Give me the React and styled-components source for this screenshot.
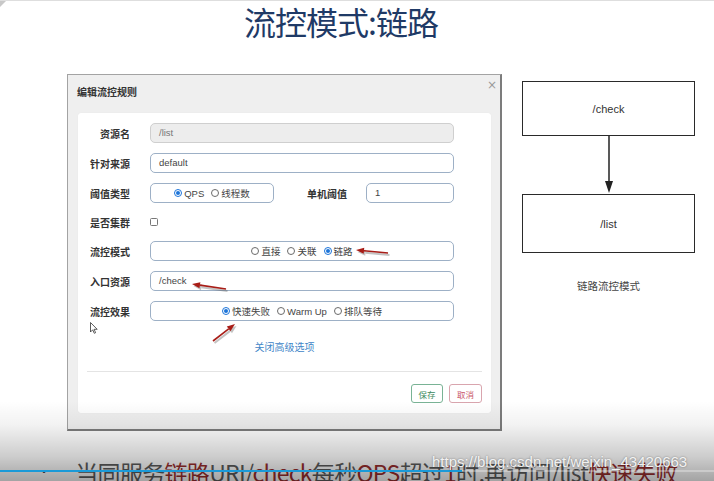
import React from 'react';
import styled, { createGlobalStyle } from 'styled-components';

const Global = createGlobalStyle`
  html, body { margin: 0; padding: 0; background: #fff; }
  body { font-family: "Noto Sans CJK SC", "Noto Sans", sans-serif; }
  * { box-sizing: border-box; }
`;

const Slide = styled.div`
  position: relative;
  width: 714px;
  height: 481px;
  overflow: hidden;
  background: #fff;
  border-top: 1px solid #dedede;
`;

const Corner = styled.div`
  position: absolute;
  left: 0;
  top: 0;
  width: 0;
  height: 0;
  border-top: 6px solid #c8c8c8;
  border-right: 6px solid transparent;
`;

const Title = styled.h1`
  margin: 0;
  height: 73px;
  padding: 0 32px 0 0;
  text-align: center;
  font-size: 32px;
  line-height: 40px;
  font-weight: 400;
  color: #1f3a66;
  letter-spacing: -1px;
`;

const Content = styled.div`
  display: flex;
  align-items: flex-start;
  padding-left: 67px;
  gap: 20px;
`;

const Dialog = styled.section`
  width: 435px;
  height: 357px;
  background: #efefef;
  border: 1px solid #a3a3a3;
  border-right: 2px solid #7c7c7c;
  border-bottom: 2px solid #7c7c7c;
  display: flex;
  flex-direction: column;
  padding: 0 9px 16px 10px;
`;

const DialogHeader = styled.header`
  height: 38px;
  display: flex;
  justify-content: space-between;
  align-items: flex-start;
  margin: 0 -6px 0 -1px;
`;

const DialogTitle = styled.h2`
  margin: 10px 0 0;
  font-size: 10px;
  line-height: 14px;
  font-weight: 700;
  color: #333;
`;

const Close = styled.span`
  margin-top: 3px;
  font-family: "DejaVu Sans", sans-serif;
  font-size: 12px;
  line-height: 14px;
  color: #9a9a9a;
`;

const Panel = styled.div`
  flex: 1;
  background: #fff;
  border-radius: 3px;
  box-shadow: 0 0 1px rgba(0, 0, 0, 0.08);
  padding: 10px 0 10px;
  display: flex;
  flex-direction: column;
`;

const Form = styled.div`
  display: flex;
  flex-direction: column;
  gap: 10px;
  margin-right: 37px;
`;

const Row = styled.div`
  display: grid;
  grid-template-columns: 52px 1fr;
  column-gap: 20px;
  align-items: center;
  height: ${(p) => (p.$short ? '18px' : '20px')};
`;

const Label = styled.label`
  text-align: right;
  font-size: 10px;
  font-weight: 700;
  color: #333;
  white-space: nowrap;
`;

const Input = styled.div`
  height: 20px;
  border: 1px solid ${(p) => (p.$disabled ? '#cfcfcf' : '#9db0c6')};
  background: ${(p) => (p.$disabled ? '#ededed' : '#fff')};
  border-radius: 5px;
  padding: 0 8px;
  font-family: "Liberation Sans", "Noto Sans CJK SC", sans-serif;
  font-size: 9.5px;
  line-height: 17px;
  color: ${(p) => (p.$disabled ? '#777' : '#444')};
`;

const RadioBox = styled.div`
  height: 20px;
  border: 1px solid #9db0c6;
  border-radius: 5px;
  display: flex;
  align-items: center;
  justify-content: center;
  gap: 7px;
`;

const Split = styled.div`
  display: grid;
  grid-template-columns: 124px 1fr 88px;
  align-items: center;
`;

const InlineLabel = styled(Label)`
  padding-right: 19px;
`;

const RadioItem = styled.span`
  display: inline-flex;
  align-items: center;
  gap: 2px;
  font-family: "Liberation Sans", "Noto Sans CJK SC", sans-serif;
  font-size: 9.5px;
  color: #444;
  white-space: nowrap;
`;

const Dot = styled.span`
  width: 8px;
  height: 8px;
  border-radius: 50%;
  border: 1px solid ${(p) => (p.$on ? '#1c74d9' : '#6b6b6b')};
  display: inline-flex;
  align-items: center;
  justify-content: center;
  &::after {
    content: '';
    width: 4px;
    height: 4px;
    border-radius: 50%;
    background: ${(p) => (p.$on ? '#1c74d9' : 'transparent')};
  }
`;

const Check = styled.span`
  width: 8px;
  height: 8px;
  border: 1px solid #777;
  border-radius: 1.5px;
`;

const Link = styled.a`
  margin-top: 18px;
  text-align: center;
  font-size: 10px;
  line-height: 16px;
  color: #3f86c8;
`;

const Divider = styled.hr`
  margin: 16px 9px 0;
  border: 0;
  border-top: 1px solid #e4e4e4;
  height: 0;
`;

const Footer = styled.div`
  margin-top: 12px;
  padding: 0 9px;
  display: flex;
  justify-content: flex-end;
  gap: 6px;
`;

const Button = styled.button`
  height: 19px;
  width: ${(p) => p.$w}px;
  padding: 0;
  background: #fff;
  border: 1px solid ${(p) => (p.$kind === 'ok' ? '#79b395' : '#d9a5ae')};
  color: ${(p) => (p.$kind === 'ok' ? '#3d8a5e' : '#c9566a')};
  border-radius: 3px;
  font-family: "Noto Sans CJK SC", sans-serif;
  font-size: 8.5px;
`;

const Diagram = styled.div`
  width: 173px;
  margin-top: 7px;
  display: flex;
  flex-direction: column;
  align-items: center;
`;

const Node = styled.div`
  width: 173px;
  height: ${(p) => p.$h}px;
  border: 1.5px solid #2a2a2a;
  display: flex;
  align-items: center;
  justify-content: center;
  font-family: "Liberation Sans", sans-serif;
  font-size: 11px;
  color: #333;
`;

const Caption = styled.div`
  margin-top: 25px;
  font-size: 10.5px;
  line-height: 16px;
  color: #444;
`;

const Bullet = styled.div`
  margin-top: 26px;
  padding-left: 38px;
  display: flex;
  align-items: center;
  gap: 26px;
  font-size: 23px;
  line-height: 30px;
  color: #5c5c5c;
  white-space: nowrap;
  letter-spacing: -0.7px;
`;

const BulletDot = styled.span`
  font-size: 12px;
  color: #444;
`;

const Red = styled.span`
  color: #9a2e2e;
`;

const Shade = styled.div`
  position: absolute;
  left: 0;
  right: 0;
  bottom: 0;
  height: 80px;
  pointer-events: none;
  background: linear-gradient(
    to bottom,
    rgba(0, 0, 0, 0) 0%,
    rgba(0, 0, 0, 0.05) 30%,
    rgba(0, 0, 0, 0.2) 70%,
    rgba(0, 0, 0, 0.36) 100%
  );
`;

const Track = styled.div`
  position: absolute;
  left: 0;
  right: 0;
  top: 469px;
  height: 2px;
  background: rgba(255, 255, 255, 0.3);
`;

const Progress = styled.div`
  position: absolute;
  left: 0;
  top: 469px;
  height: 2px;
  background: #1a9ad8;
`;

const Watermark = styled.div`
  position: absolute;
  left: 432px;
  top: 452px;
  font-family: "Liberation Sans", sans-serif;
  font-size: 15px;
  line-height: 17px;
  color: rgba(255, 255, 255, 0.9);
  text-shadow: 0 0 2px rgba(0, 0, 0, 0.45);
`;

const Annot = styled.svg`
  position: absolute;
  left: 0;
  top: 0;
  pointer-events: none;
  overflow: visible;
`;

function RedArrow({ x1, y1, x2, y2 }) {
  const dx = x2 - x1;
  const dy = y2 - y1;
  const len = Math.hypot(dx, dy);
  const ux = dx / len;
  const uy = dy / len;
  const hl = 8;
  const hw = 3;
  const bx = x2 - ux * hl;
  const by = y2 - uy * hl;
  const p1 = `${bx - uy * hw},${by + ux * hw}`;
  const p2 = `${bx + uy * hw},${by - ux * hw}`;
  return (
    <g>
      <g transform="translate(1.5,2)" opacity="0.35" fill="#555" stroke="#555">
        <line x1={x1} y1={y1} x2={bx} y2={by} strokeWidth="2" />
        <polygon points={`${x2},${y2} ${p1} ${p2}`} strokeWidth="0" />
      </g>
      <line x1={x1} y1={y1} x2={bx} y2={by} stroke="#a81d17" strokeWidth="1.6" />
      <polygon points={`${x2},${y2} ${p1} ${p2}`} fill="#a81d17" />
    </g>
  );
}

function Radio({ on, children }) {
  return (
    <RadioItem>
      <Dot $on={on} />
      {children}
    </RadioItem>
  );
}

export default function App() {
  return (
    <>
      <Global />
      <Slide>
        <Corner />
        <Title>流控模式:链路</Title>
        <Content>
          <Dialog>
            <DialogHeader>
              <DialogTitle>编辑流控规则</DialogTitle>
              <Close>×</Close>
            </DialogHeader>
            <Panel>
              <Form>
                <Row>
                  <Label>资源名</Label>
                  <Input $disabled>/list</Input>
                </Row>
                <Row>
                  <Label>针对来源</Label>
                  <Input>default</Input>
                </Row>
                <Row>
                  <Label>阈值类型</Label>
                  <Split>
                    <RadioBox>
                      <Radio on>QPS</Radio>
                      <Radio>线程数</Radio>
                    </RadioBox>
                    <InlineLabel>单机阈值</InlineLabel>
                    <Input>1</Input>
                  </Split>
                </Row>
                <Row $short>
                  <Label>是否集群</Label>
                  <Check />
                </Row>
                <Row>
                  <Label>流控模式</Label>
                  <RadioBox>
                    <Radio>直接</Radio>
                    <Radio>关联</Radio>
                    <Radio on>链路</Radio>
                  </RadioBox>
                </Row>
                <Row>
                  <Label>入口资源</Label>
                  <Input>/check</Input>
                </Row>
                <Row>
                  <Label>流控效果</Label>
                  <RadioBox>
                    <Radio on>快速失败</Radio>
                    <Radio>Warm Up</Radio>
                    <Radio>排队等待</Radio>
                  </RadioBox>
                </Row>
              </Form>
              <Link>关闭高级选项</Link>
              <Divider />
              <Footer>
                <Button $kind="ok" $w={32}>保存</Button>
                <Button $kind="cancel" $w={33}>取消</Button>
              </Footer>
            </Panel>
          </Dialog>
          <Diagram>
            <Node $h={55}>/check</Node>
            <svg width="12" height="58" viewBox="0 0 12 58">
              <line x1="6" y1="0" x2="6" y2="46" stroke="#222" strokeWidth="1.5" />
              <polygon points="2,45 10,45 6,57" fill="#222" />
            </svg>
            <Node $h={59}>/list</Node>
            <Caption>链路流控模式</Caption>
          </Diagram>
        </Content>
        <Bullet>
          <BulletDot>•</BulletDot>
          <span>
            当同服务<Red>链路</Red>URI/<Red>check</Red>每秒<Red>QPS</Red>超过<Red>1</Red>时,再访问/list<Red>快速失败</Red>
          </span>
        </Bullet>
        <Annot width="714" height="481">
          <RedArrow x1={388} y1={252} x2={356} y2={249} />
          <RedArrow x1={226} y1={288} x2={192} y2={283} />
          <RedArrow x1={213} y1={340} x2={235} y2={323} />
          <path
            d="M90.5 321.5 L90.5 331 L92.7 328.8 L94.3 332.3 L95.6 331.7 L94.1 328.3 L97.2 328.3 Z"
            fill="#fff"
            stroke="#333"
            strokeWidth="0.8"
          />
        </Annot>
        <Shade />
        <Track />
        <Progress style={{ width: 462 }} />
        <Watermark>https://blog.csdn.net/weixin_43420663</Watermark>
      </Slide>
    </>
  );
}
